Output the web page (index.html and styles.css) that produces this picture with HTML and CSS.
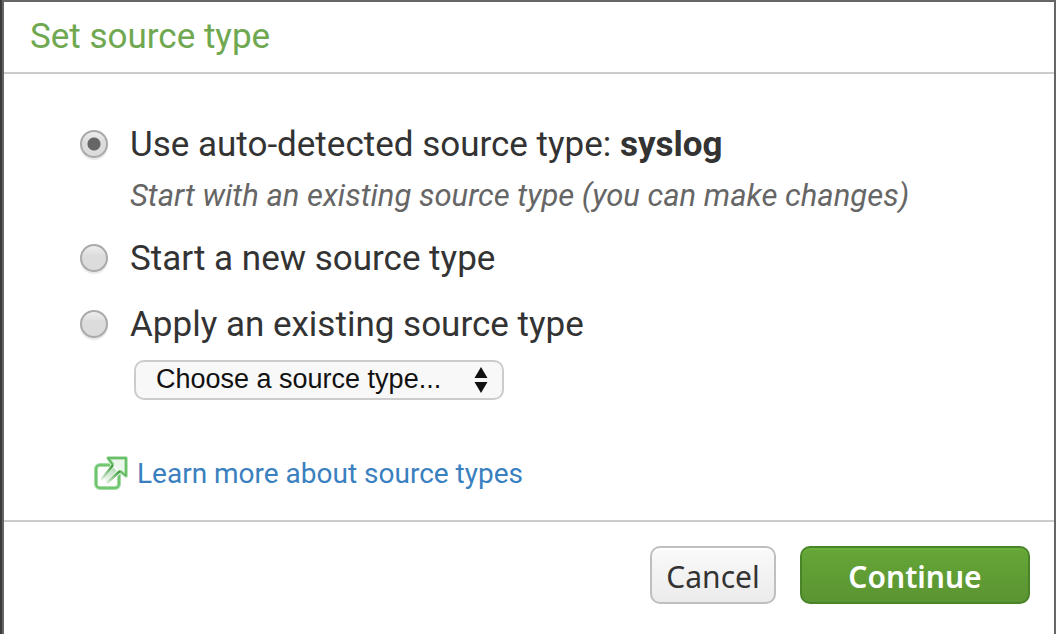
FILE: index.html
```html
<!DOCTYPE html>
<html lang="en">
<head>
<meta charset="utf-8">
<meta name="viewport" content="width=device-width, initial-scale=1">
<title>Set source type</title>
<link rel="stylesheet" href="styles.css">
</head>
<body>
<form class="dialog" role="dialog" aria-labelledby="dialog-title">
  <header class="dialog-header">
    <h1 class="dialog-title" id="dialog-title">Set source type</h1>
  </header>
  <div class="dialog-body">
    <div class="option">
      <input class="radio" type="radio" name="mode" id="mode-auto" aria-describedby="auto-hint" checked>
      <div class="option-text">
        <label class="option-label" for="mode-auto">Use auto-detected source type: <b>syslog</b></label>
        <p class="hint" id="auto-hint">Start with an existing source type (you can make changes)</p>
      </div>
    </div>
    <div class="option">
      <input class="radio" type="radio" name="mode" id="mode-new">
      <label class="option-label" for="mode-new">Start a new source type</label>
    </div>
    <div class="option">
      <input class="radio" type="radio" name="mode" id="mode-existing">
      <div class="option-text">
        <label class="option-label" for="mode-existing">Apply an existing source type</label>
        <div class="select-box">
          <select class="select" aria-label="Existing source type">
            <option>Choose a source type...</option>
          </select>
          <svg class="select-arrows" viewBox="0 0 14 26" aria-hidden="true"><path d="M7 0l6.500 11H.5zM.5 15h13L7 26z"/></svg>
        </div>
      </div>
    </div>
    <a class="learn-more" href="#">
      <svg class="learn-icon" viewBox="0 0 36 36" aria-hidden="true">
        <defs>
          <linearGradient id="shaft-line" gradientUnits="userSpaceOnUse" x1="25" y1="10" x2="10" y2="28">
            <stop offset="0.2" stop-color="#44a044"/>
            <stop offset="1" stop-color="#44a044" stop-opacity="0"/>
          </linearGradient>
        </defs>
        <rect x="3" y="9" width="23" height="23" rx="4" fill="#fff" stroke="#a5dca5" stroke-width="4"/>
        <rect x="3" y="9" width="23" height="23" rx="4" fill="none" stroke="#62c062" stroke-width="1.600"/>
        <path d="M8 25L20 9.500l-5-7.500h18v18l-6-5L14 28z" fill="#fff" stroke="#fff" stroke-width="4"/>
        <path d="M20 9l-5-7h18v18l-6-5" fill="#eaf7ea" stroke="#a5dca5" stroke-width="3.500" stroke-linejoin="round"/>
        <path d="M20 9l-5-7h18v18l-6-5" fill="none" stroke="#55b555" stroke-width="1.400" stroke-linejoin="round"/>
        <path d="M20 9L8 24M27 15L14 27" fill="none" stroke="url(#shaft-line)" stroke-width="2.500"/>
        <path d="M22 13L12 24" fill="none" stroke="url(#shaft-line)" stroke-opacity=".35" stroke-width="5"/>
      </svg>
      <span>Learn more about source types</span>
    </a>
  </div>
  <footer class="dialog-footer">
    <button class="button" type="button">Cancel</button>
    <button class="button button-primary" type="submit">Continue</button>
  </footer>
</form>
</body>
</html>
```
FILE: styles.css
```css
* {
  box-sizing: border-box;
}

body {
  margin: 0;
  padding-left: 2px;
  background: #3b3b3b;
  color: #333;
  font-family: Roboto, "Liberation Sans", sans-serif;
}

.dialog {
  display: flex;
  flex-direction: column;
  min-height: 100vh;
  border: 2px solid #666;
  border-bottom: 0;
  background: #fff;
}

.dialog-header {
  padding: 12px 26px;
  border-bottom: 2px solid #ccc;
}

.dialog-title {
  margin: 0;
  color: #6fa850;
  font-size: 35px;
  font-weight: 400;
  line-height: 46px;
}

.dialog-body {
  display: flex;
  flex-direction: column;
  align-items: flex-start;
  gap: 20px;
  padding: 48px 26px 26px 76px;
}

.option {
  display: flex;
  gap: 22px;
}

.radio {
  appearance: none;
  flex: none;
  width: 28px;
  height: 28px;
  margin: 8px 0 0;
  border: 2px solid #aaa;
  border-radius: 50%;
  background: linear-gradient(#eee, #dcdcdc 40%);
  box-shadow: 0 2px 1px #e8e8e8;
}

.radio:checked {
  background: radial-gradient(circle, #666 6px, transparent 7px), linear-gradient(#eee, #dcdcdc 40%);
}

.option-label {
  display: block;
  font-size: 35px;
  line-height: 46px;
}

.hint {
  margin: 8px 0 0;
  color: #666;
  font-size: 31px;
  font-style: italic;
  line-height: 40px;
}

.select-box {
  position: relative;
  width: 370px;
  margin: 12px 0 0 4px;
}

.select {
  appearance: none;
  display: block;
  width: 100%;
  height: 40px;
  padding: 0 48px 2px 20px;
  border: 2px solid #ccc;
  border-radius: 10px;
  background: #f8f8f8;
  color: #111;
  font-family: "Liberation Sans", Arial, sans-serif;
  font-size: 27px;
}

.select-arrows {
  position: absolute;
  top: 7px;
  right: 16px;
  width: 14px;
  height: 26px;
  fill: #111;
  pointer-events: none;
}

.learn-more {
  display: flex;
  align-items: center;
  gap: 8px;
  margin: 34px 0 0 13px;
  color: #3a80bf;
  font-size: 28px;
  line-height: 40px;
  text-decoration: none;
}

.learn-icon {
  flex: none;
  width: 36px;
  height: 36px;
}

.dialog-footer {
  display: flex;
  flex: 1;
  align-items: flex-start;
  justify-content: flex-end;
  gap: 24px;
  padding: 24px;
  border-top: 2px solid #ccc;
}

.button {
  min-width: 126px;
  height: 58px;
  padding: 4px 12px 0;
  border: 2px solid #bfbfbf;
  border-radius: 10px;
  background: linear-gradient(#fafafa, #ebebeb);
  box-shadow: inset 0 2px #fff;
  color: #333;
  font-family: "Noto Sans", "Open Sans", sans-serif;
  font-size: 30px;
  line-height: 40px;
}

.button-primary {
  min-width: 230px;
  border-color: #4a8429;
  background: linear-gradient(#65a637, #5b9432);
  box-shadow: inset 0 2px #6cb03c;
  color: #fff;
  font-weight: 600;
}
```
